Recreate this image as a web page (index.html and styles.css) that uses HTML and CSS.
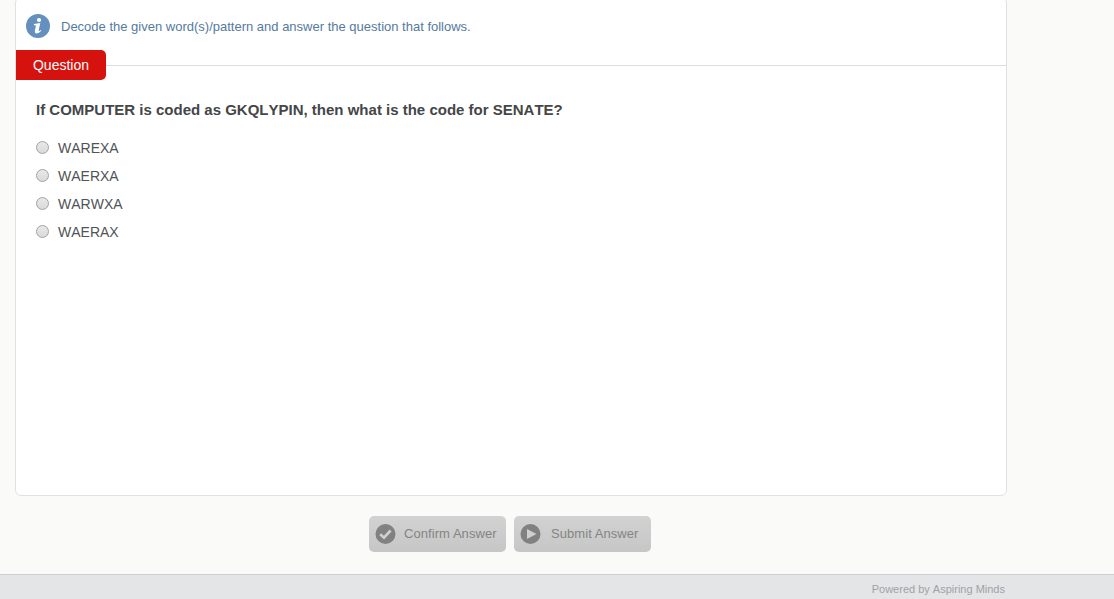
FILE: index.html
```html
<!DOCTYPE html>
<html lang="en">
<head>
<meta charset="utf-8">
<title>Question</title>
<link rel="stylesheet" href="styles.css">
</head>
<body>
<main class="page">
  <section class="card">
    <header class="instruction">
      <svg class="info-icon" viewBox="0 0 24 24" aria-hidden="true">
        <circle cx="12" cy="12" r="12" fill="#6390be"/>
        <ellipse cx="13" cy="6" rx="2.1" ry="1.9" fill="#fff"/>
        <path d="M8 9.9 L14.3 9 L12.7 16.2 Q12.5 17.2 13.3 16.9 L14.8 15.9 L15.3 16.7 Q12.8 19.5 10.3 19.4 Q8.4 19.2 8.8 16.9 L9.8 12.4 Q10 11.3 9.1 11.3 L7.8 11.3 Z" fill="#fff"/>
      </svg>
      <p class="instruction-text">Decode the given word(s)/pattern and answer the question that follows.</p>
    </header>
    <div class="section-title">
      <h1 class="section-label">Question</h1>
      <span class="section-rule"></span>
    </div>
    <h2 class="question">If COMPUTER is coded as GKQLYPIN, then what is the code for SENATE?</h2>
    <div class="options">
      <label class="option"><input class="radio" type="radio" name="answer"><span>WAREXA</span></label>
      <label class="option"><input class="radio" type="radio" name="answer"><span>WAERXA</span></label>
      <label class="option"><input class="radio" type="radio" name="answer"><span>WARWXA</span></label>
      <label class="option"><input class="radio" type="radio" name="answer"><span>WAERAX</span></label>
    </div>
  </section>
  <div class="actions">
    <button class="button" type="button">
      <svg class="button-icon" viewBox="0 0 21 20" aria-hidden="true">
        <circle cx="10.5" cy="10" r="10" fill="#818181"/>
        <path d="M5.2 10.2 L9 13.7 L15.6 6.5" fill="none" stroke="#cfcfcf" stroke-width="2.7"/>
      </svg>
      <span class="button-text">Confirm Answer</span>
    </button>
    <button class="button" type="button">
      <svg class="button-icon" viewBox="0 0 21 20" aria-hidden="true">
        <circle cx="10.5" cy="10" r="10" fill="#818181"/>
        <path d="M7 5 L16.5 10 L7 15 Z" fill="#cfcfcf"/>
      </svg>
      <span class="button-text button-text-submit">Submit Answer</span>
    </button>
  </div>
</main>
<footer class="footer"><span class="powered">Powered by Aspiring Minds</span></footer>
</body>
</html>
```

FILE: styles.css
```css
* { box-sizing: border-box; }
body {
  margin: 0;
  height: 599px;
  overflow: hidden;
  display: flex;
  flex-direction: column;
  background: #fafaf8;
  font-family: "Liberation Sans", Arial, sans-serif;
  font-kerning: none;
}
.page { height: 574px; flex: none; overflow: hidden; padding-left: 15px; }
.card {
  width: 992px;
  height: 499px;
  margin-top: -3px;
  background: #fff;
  border: 1px solid #dfe1e6;
  border-radius: 6px;
}
.instruction { display: flex; align-items: center; gap: 11px; height: 52px; padding: 4px 0 0 10px; }
.info-icon { width: 24px; height: 24px; }
.instruction-text { margin: 0; padding-top: 2px; font-size: 13px; line-height: 16px; color: #557a9e; }
.section-title { display: flex; align-items: center; height: 30px; }
.section-label {
  width: 90px;
  height: 30px;
  margin: 0;
  border-radius: 0 5px 5px 0;
  background: #d6120e;
  color: #fff;
  font-size: 14px;
  font-weight: 400;
  line-height: 30px;
  text-align: center;
}
.section-rule { flex: 1; height: 1px; background: #dddde1; }
.question {
  margin: 20px 0 0 20px;
  font-size: 15px;
  line-height: 20px;
  color: #444648;
}
.options { display: flex; flex-direction: column; padding: 14px 0 0 20px; }
.option { display: flex; align-items: center; gap: 9px; height: 28px; font-size: 14px; color: #505456; }
.radio {
  appearance: none;
  width: 13px;
  height: 13px;
  margin: 0 0 2px;
  border: 1px solid #a2a2a2;
  border-radius: 50%;
  background: linear-gradient(#e8e8e8, #dadada);
}
.actions { display: flex; gap: 8px; padding: 20px 0 0 354px; }
.button {
  display: flex;
  align-items: center;
  width: 137px;
  height: 36px;
  padding: 0 0 0 6px;
  border: 0;
  border-radius: 5px;
  background: linear-gradient(#d2d2d2, #c6c6c6);
  color: #848484;
  font: 13px "Liberation Sans", Arial, sans-serif;
  letter-spacing: 0.06px;
}
.button-icon { width: 21px; height: 20px; }
.button-text { margin-left: 8px; padding-bottom: 2px; white-space: nowrap; }
.button-text-submit { margin-left: 10px; }
.footer {
  flex: none;
  height: 25px;
  padding: 8px 109px 0 0;
  border-top: 1px solid #cfd0d3;
  background: #e4e5e7;
  text-align: right;
}
.powered { display: block; font-size: 11px; line-height: 13px; color: #a0a2a5; }
```
